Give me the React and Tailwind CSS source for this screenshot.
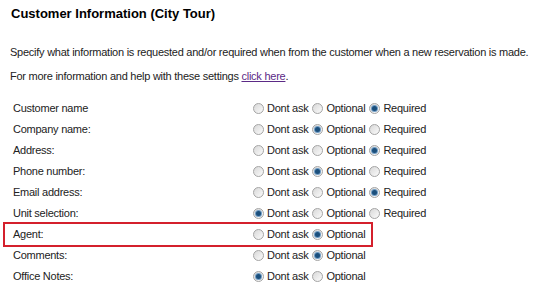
const fields = [
  { label: "Customer name", value: "required", required: true },
  { label: "Company name:", value: "optional", required: true },
  { label: "Address:", value: "required", required: true },
  { label: "Phone number:", value: "optional", required: true },
  { label: "Email address:", value: "required", required: true },
  { label: "Unit selection:", value: "dont", required: true },
  { label: "Agent:", value: "optional", required: false, highlight: true },
  { label: "Comments:", value: "optional", required: false },
  { label: "Office Notes:", value: "dont", required: false },
];

const Radio = ({ checked }) => (
  <span className="relative inline-block w-[11px] h-[11px] rounded-full border border-[#a4a4a4] bg-gradient-to-br from-[#d8d8d8] to-[#fbfbfb] shrink-0">
    {checked && (
      <span className="absolute left-[2px] top-[2px] w-[5px] h-[5px] rounded-full bg-[#1b4f7c] shadow-[0_0_0_1px_#6f9cc4]" />
    )}
  </span>
);

const Option = ({ checked, text }) => (
  <span className="flex items-center gap-[3px] mr-[4px] whitespace-nowrap">
    <Radio checked={checked} />
    <span>{text}</span>
  </span>
);

export default function App() {
  return (
    <div className="w-[535px] h-[290px] bg-white overflow-hidden text-[11px] tracking-[-0.25px] text-[#222] font-['Liberation_Sans',Arial,sans-serif]">
      <h1 className="pl-[11px] pt-[5px] text-[13px] tracking-normal font-bold text-black leading-[18px]">
        Customer Information (City Tour)
      </h1>
      <p className="pl-[10px] mt-[22px] leading-[14px] whitespace-nowrap">
        Specify what information is requested and/or required when from the customer when a new reservation is made.
      </p>
      <p className="pl-[10px] mt-[10px] leading-[14px] whitespace-nowrap">
        For more information and help with these settings{" "}
        <a href="#" className="text-[#5b2a86] underline">click here</a>.
      </p>
      <div className="mt-[15px] flex flex-col">
        {fields.map((f) => (
          <div
            key={f.label}
            className={
              f.highlight
                ? "flex items-center ml-[3px] w-[370px] h-[25px] -my-[2px] border-2 border-[#d4202c] pl-[8px]"
                : "flex items-center h-[21px] pl-[13px]"
            }
          >
            <span className="w-[240px] shrink-0">{f.label}</span>
            <Option checked={f.value === "dont"} text="Dont ask" />
            <Option checked={f.value === "optional"} text="Optional" />
            {f.required && <Option checked={f.value === "required"} text="Required" />}
          </div>
        ))}
      </div>
    </div>
  );
}
